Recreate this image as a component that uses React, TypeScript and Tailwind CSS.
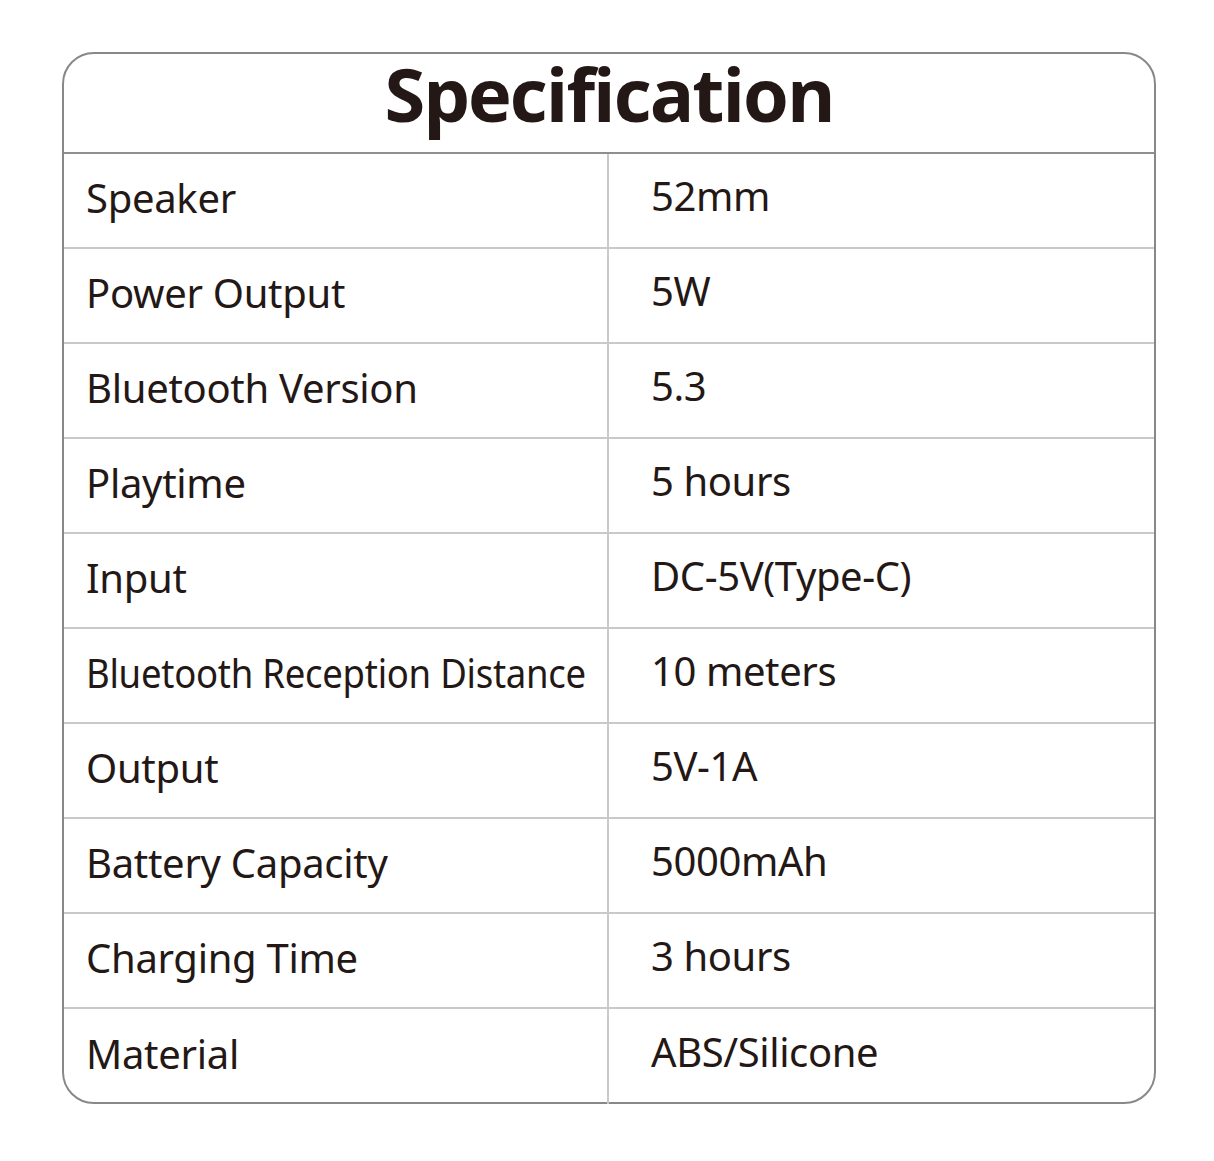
import React from "react";

const specs: [string, string][] = [
  ["Speaker", "52mm"],
  ["Power Output", "5W"],
  ["Bluetooth Version", "5.3"],
  ["Playtime", "5 hours"],
  ["Input", "DC-5V(Type-C)"],
  ["Bluetooth Reception Distance", "10 meters"],
  ["Output", "5V-1A"],
  ["Battery Capacity", "5000mAh"],
  ["Charging Time", "3 hours"],
  ["Material", "ABS/Silicone"],
];

const App: React.FC = () => {
  return (
    <div className="w-[1214px] h-[1161px] bg-white pt-[52px] pl-[62px]">
      <div className="w-[1094px] h-[1052px] border-2 border-[#8a8787] rounded-[32px] text-[#231815]">
        {/* Title */}
        <div className="h-[100px] border-b-2 border-[#8f8f8f] flex items-start justify-center">
          <h1 className="font-['Open_Sans',sans-serif] font-bold text-[74px] leading-[1.15] -mt-[3px] tracking-[-2px] whitespace-nowrap">
            Specification
          </h1>
        </div>

        {/* Rows */}
        <div className="flex flex-col">
          {specs.map(([label, value], i) => (
            <div
              key={label}
              className={`grid grid-cols-[545px_1fr] h-[95px] shrink-0 ${
                i < specs.length - 1 ? "border-b-2 border-[#c9c9c9]" : ""
              }`}
            >
              <div className="border-r-2 border-[#c9c9c9] flex items-center pl-[22px] pb-[6px] font-['Noto_Sans',sans-serif] text-[40px] leading-none tracking-[-0.3px] whitespace-nowrap">
                <span
                  className={
                    label.length > 20 ? "inline-block origin-left scale-x-[0.913]" : ""
                  }
                >
                  {label}
                </span>
              </div>
              <div className="flex items-center pl-[42px] pb-[10px] font-['Noto_Sans',sans-serif] text-[40px] leading-none tracking-[-0.4px] whitespace-nowrap">
                {value}
              </div>
            </div>
          ))}
        </div>
      </div>
    </div>
  );
};

export default App;
